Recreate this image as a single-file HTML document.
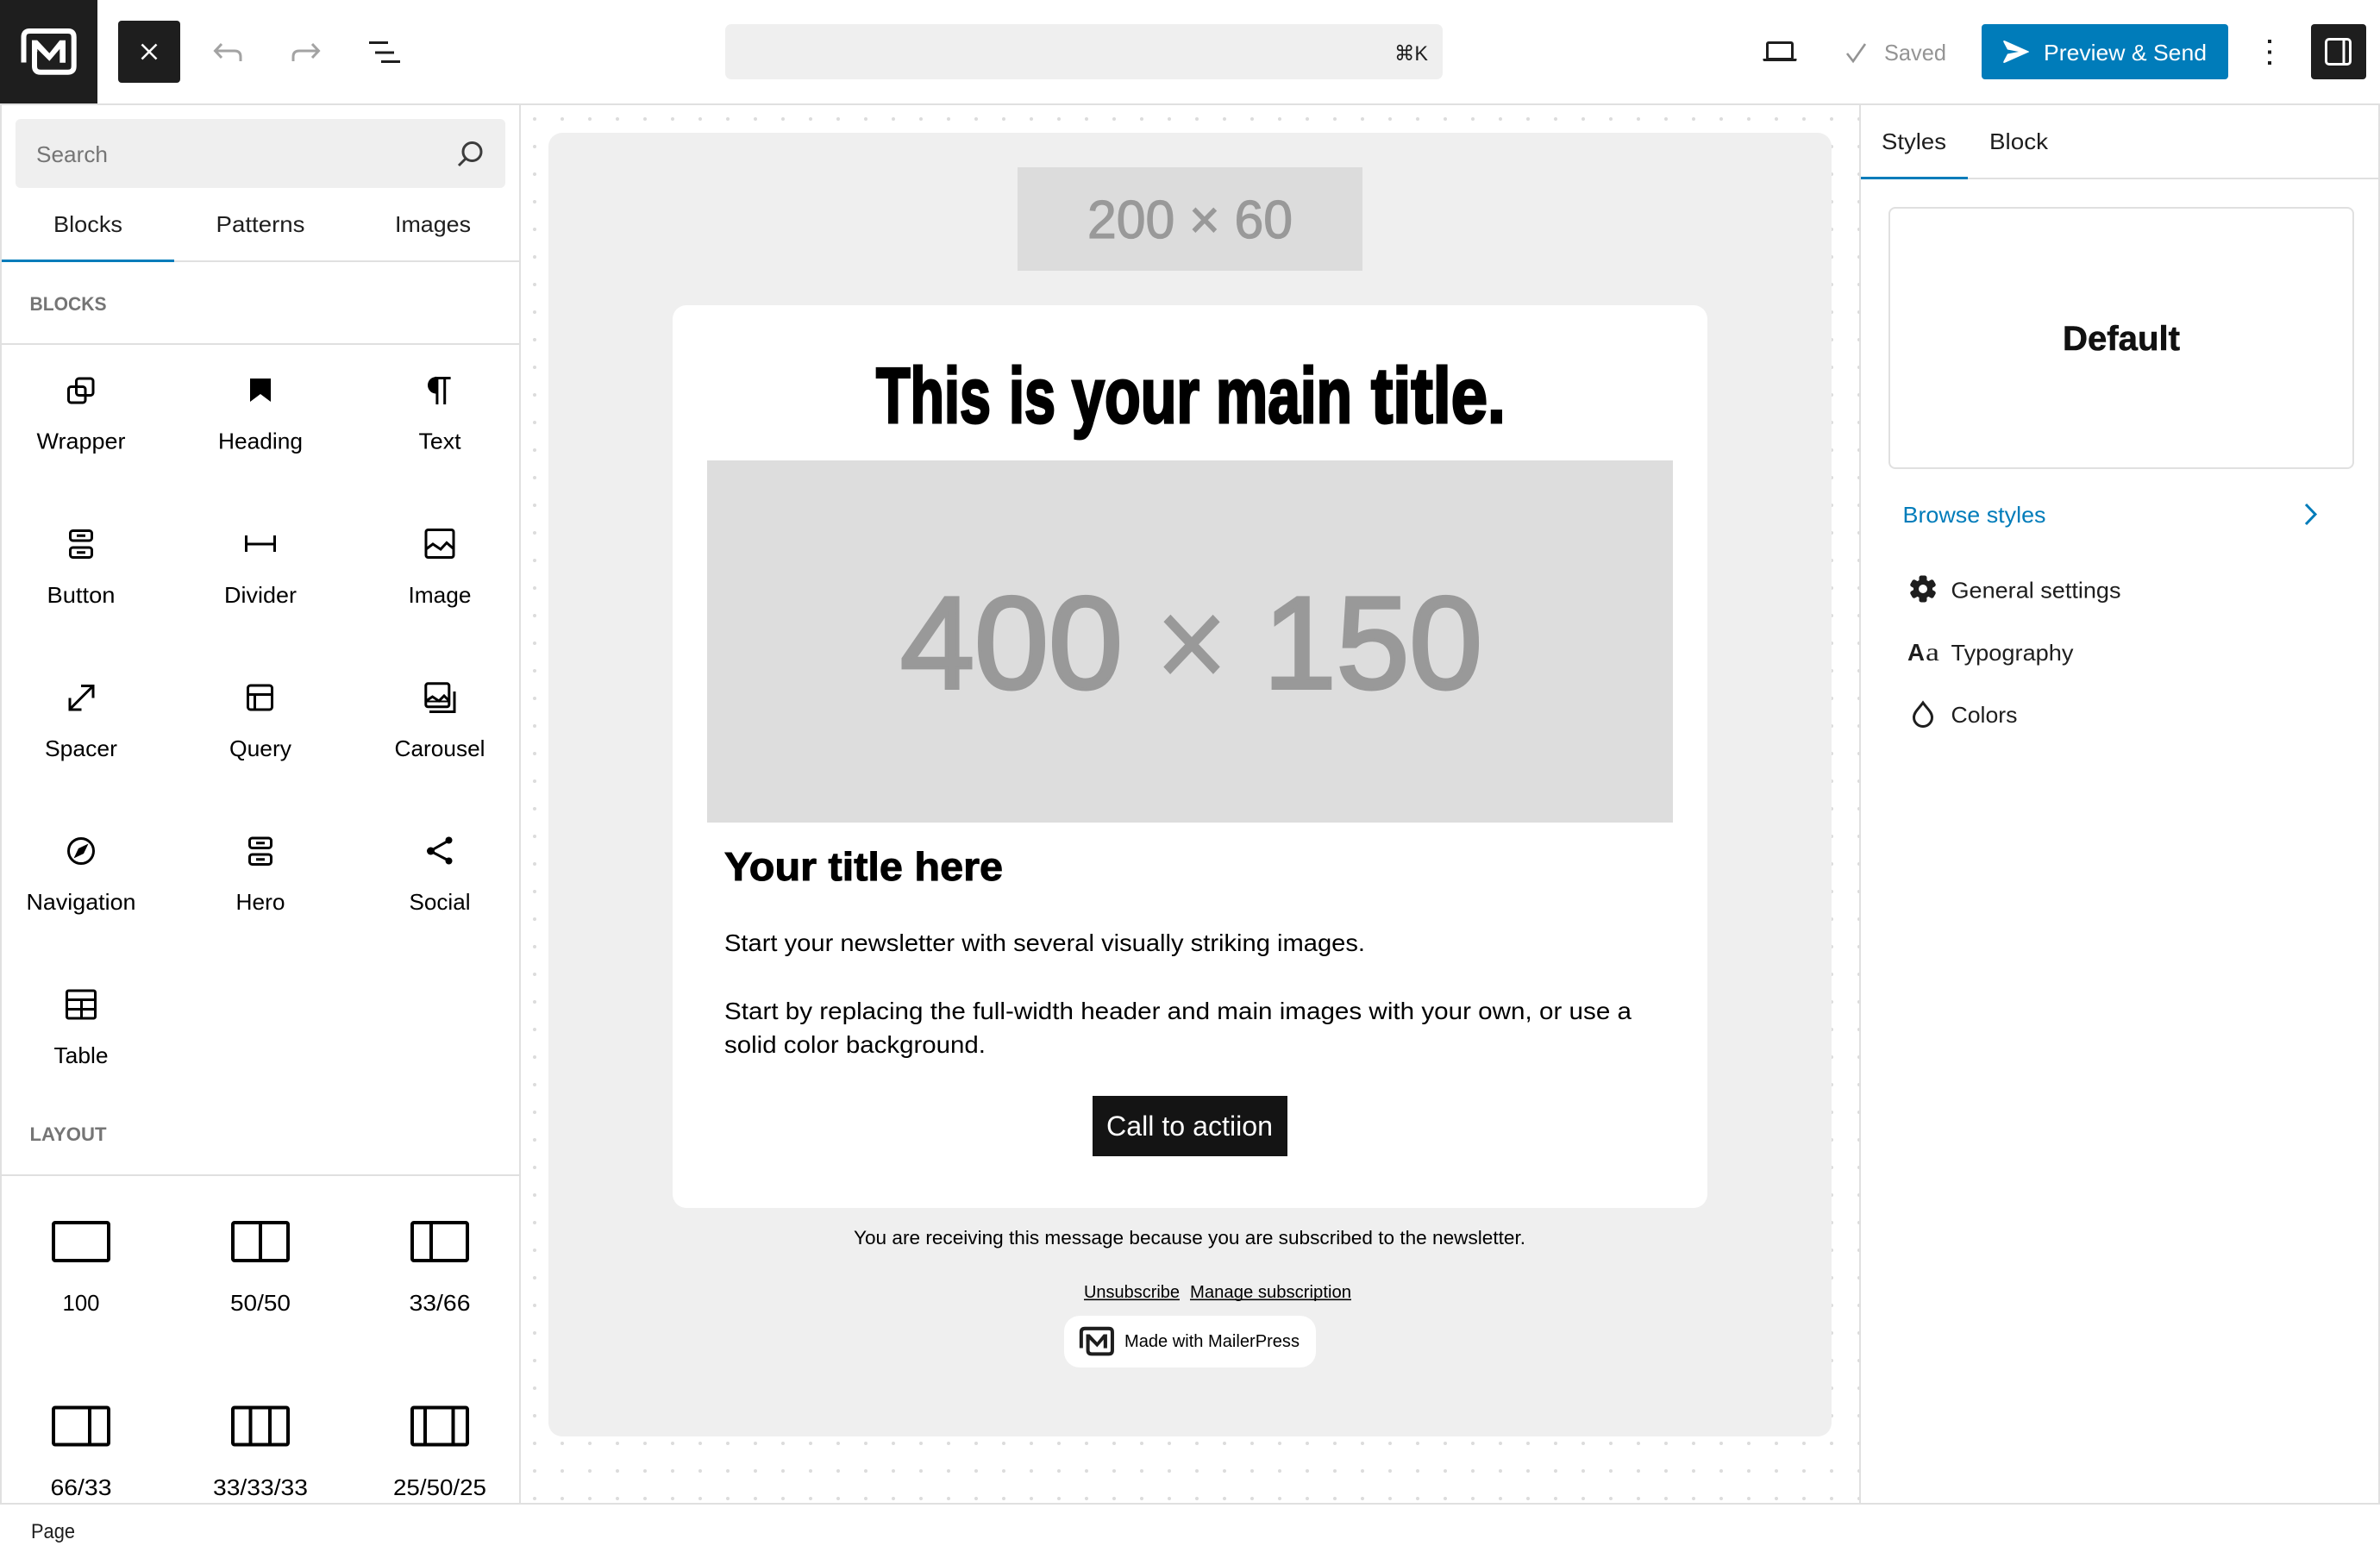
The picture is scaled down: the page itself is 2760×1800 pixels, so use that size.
<!DOCTYPE html>
<html lang="en">
<head>
<meta charset="utf-8">
<title>MailerPress editor</title>
<style>
html,body{margin:0;padding:0;background:#fff;width:2760px;height:1800px;overflow:hidden}
svg{display:block}
text{font-family:"Liberation Sans",sans-serif;fill:#000;font-size:26px}
.m{text-anchor:middle}
.d{fill:#1e1e1e}
.s{fill:none;stroke:#000;stroke-width:3}
.l{fill:none;stroke:#000;stroke-width:4}
.t{font-size:91px;font-weight:700;stroke:#000;stroke-width:3}
.b{font-size:152px;fill:#999;stroke:#999;stroke-width:4}
</style>
</head>
<body>
<svg width="2760" height="1800" viewBox="0 0 2760 1800" xmlns="http://www.w3.org/2000/svg">
<defs>
<pattern id="dots" x="604" y="122" width="32" height="32" patternUnits="userSpaceOnUse"><circle cx="16" cy="16" r="2" fill="#dcdcdc"/></pattern>
</defs>
<rect width="2760" height="1800" fill="#fff"/>

<!-- canvas -->
<rect x="604" y="122" width="1552" height="1621" fill="url(#dots)"/>
<rect x="636" y="154" width="1488" height="1512" rx="16" fill="#efefef"/>
<rect x="1180" y="194" width="400" height="120" fill="#dcdcdc"/>
<text x="1261" y="276" textLength="238" lengthAdjust="spacingAndGlyphs" style="font-size:62px;fill:#999;stroke:#999;stroke-width:1.2">200 × 60</text>
<rect x="780" y="354" width="1200" height="1047" rx="16" fill="#fff"/>
<text x="1016" y="490" textLength="133" lengthAdjust="spacingAndGlyphs" class="t">This</text>
<text x="1170" y="490" textLength="54" lengthAdjust="spacingAndGlyphs" class="t">is</text>
<text x="1243" y="490" textLength="148" lengthAdjust="spacingAndGlyphs" class="t">your</text>
<text x="1410" y="490" textLength="158" lengthAdjust="spacingAndGlyphs" class="t">main</text>
<text x="1590" y="490" textLength="156" lengthAdjust="spacingAndGlyphs" class="t">title.</text>
<rect x="820" y="534" width="1120" height="420" fill="#ddd"/>
<text x="1044" y="798" textLength="258" lengthAdjust="spacingAndGlyphs" class="b">400</text>
<text x="1340" y="798" textLength="84" lengthAdjust="spacingAndGlyphs" class="b" style="stroke-width:1">×</text>
<text x="1465" y="798" textLength="254" lengthAdjust="spacingAndGlyphs" class="b">150</text>
<text x="840" y="1021" textLength="323" lengthAdjust="spacingAndGlyphs" style="font-size:46px;font-weight:700;stroke:#000;stroke-width:1">Your title here</text>
<text x="840" y="1103" textLength="743" lengthAdjust="spacingAndGlyphs" style="font-size:28px">Start your newsletter with several visually striking images.</text>
<text x="840" y="1182" textLength="1052" lengthAdjust="spacingAndGlyphs" style="font-size:28px">Start by replacing the full-width header and main images with your own, or use a</text>
<text x="840" y="1221" textLength="303" lengthAdjust="spacingAndGlyphs" style="font-size:28px">solid color background.</text>
<rect x="1267" y="1271" width="226" height="70" fill="#141414"/>
<text x="1283" y="1317" textLength="193" lengthAdjust="spacingAndGlyphs" style="font-size:32px;fill:#fff">Call to actiion</text>
<text x="990" y="1443" textLength="779" lengthAdjust="spacingAndGlyphs" style="font-size:22px">You are receiving this message because you are subscribed to the newsletter.</text>
<text x="1257" y="1505" textLength="111" lengthAdjust="spacingAndGlyphs" style="font-size:20px">Unsubscribe</text>
<text x="1380" y="1505" textLength="187" lengthAdjust="spacingAndGlyphs" style="font-size:20px">Manage subscription</text>
<rect x="1257" y="1506.5" width="111" height="1.6" fill="#000"/>
<rect x="1380" y="1506.5" width="187" height="1.6" fill="#000"/>
<rect x="1234" y="1526" width="292" height="60" rx="18" fill="#fff"/>
<g transform="translate(1236.8 1518.5) scale(.62)">
<path d="M27.5 72.5V43Q27.5 36 34.5 36H79Q85.7 36 85.7 43V76.7Q85.7 83.7 79 83.7H47Q40 83.7 40 76.7V46.7" fill="none" stroke="#1e1e1e" stroke-width="6.5"/>
<path d="M37 46.7H43.3L57.3 61.7L69.3 46.7H76V72.7H69.3V56.7L57.3 70.7L43.3 56.7V60H37Z" fill="#1e1e1e"/>
</g>
<text x="1304" y="1562" textLength="203" lengthAdjust="spacingAndGlyphs" style="font-size:20px">Made with MailerPress</text>

<!-- top bar -->
<rect width="2760" height="120" fill="#fff"/>
<rect y="120" width="2760" height="2" fill="#e0e0e0"/>
<rect width="113" height="120" fill="#1e1e1e"/>
<path d="M27.5 72.5V43Q27.5 36 34.5 36H79Q85.7 36 85.7 43V76.7Q85.7 83.7 79 83.7H47Q40 83.7 40 76.7V46.7" fill="none" stroke="#fff" stroke-width="6"/>
<path d="M37 46.7H43.3L57.3 61.7L69.3 46.7H76V72.7H69.3V56.7L57.3 70.7L43.3 56.7V60H37Z" fill="#fff"/>
<rect x="137" y="24" width="72" height="72" rx="4" fill="#1e1e1e"/>
<path d="M164.5 51.5L181.5 68.5M181.5 51.5L164.5 68.5" stroke="#fff" stroke-width="2.6" fill="none"/>
<g fill="none" stroke="#a3a3a3" stroke-width="3">
<path d="M279 71V66Q279 59 272 59H251"/>
<path d="M257 51L249.5 59L257 67"/>
<path d="M340 71V66Q340 59 347 59H368"/>
<path d="M362 51L369.5 59L362 67"/>
</g>
<rect x="428" y="48" width="22" height="3" fill="#1e1e1e"/>
<rect x="435" y="59.500" width="22" height="3" fill="#1e1e1e"/>
<rect x="442" y="70" width="22" height="3" fill="#1e1e1e"/>
<rect x="841" y="28" width="832" height="64" rx="7" fill="#efefef"/>
<text x="1617" y="70" textLength="39" lengthAdjust="spacingAndGlyphs" class="d" style="font-family:'Liberation Sans','DejaVu Sans',sans-serif;font-size:24px">⌘K</text>
<rect x="2049.500" y="49.500" width="29" height="19" rx="1.500" fill="none" stroke="#1e1e1e" stroke-width="3"/>
<path d="M2044.500 68H2083.500V69.500Q2083.500 71 2082 71H2046Q2044.500 71 2044.500 69.500Z" fill="#1e1e1e"/>
<path d="M2142 62L2149 71L2163 51" fill="none" stroke="#949494" stroke-width="2.6"/>
<text x="2185" y="70" textLength="72" lengthAdjust="spacingAndGlyphs" style="fill:#949494">Saved</text>
<rect x="2298" y="28" width="286" height="64" rx="4" fill="#007cba"/>
<path d="M2325 47.200L2352 59.200Q2354 60 2352 60.800L2325 72.800Q2322.500 73.500 2323.500 71L2328 62.500L2341 60L2328 57.500L2323.500 49Q2322.500 46.500 2325 47.200Z" fill="#fff"/>
<text x="2370" y="70" textLength="189" lengthAdjust="spacingAndGlyphs" style="fill:#fff">Preview &amp; Send</text>
<rect x="2630" y="46" width="4" height="4" fill="#1e1e1e"/>
<rect x="2630" y="58.500" width="4" height="4" fill="#1e1e1e"/>
<rect x="2630" y="71" width="4" height="4" fill="#1e1e1e"/>
<rect x="2680" y="28" width="64" height="64" rx="4" fill="#1e1e1e"/>
<rect x="2697.500" y="45.500" width="28" height="29" rx="3.500" fill="none" stroke="#fff" stroke-width="3"/>
<rect x="2716.500" y="45" width="3" height="30" fill="#fff"/>

<!-- left panel -->
<rect x="0" y="122" width="604" height="1621" fill="#fff"/>
<rect x="0" y="122" width="2" height="1621" fill="#e0e0e0"/>
<rect x="602" y="122" width="2" height="1621" fill="#e0e0e0"/>
<rect x="18" y="138" width="568" height="80" rx="6" fill="#efefef"/>
<text x="42" y="188" textLength="83" lengthAdjust="spacingAndGlyphs" style="fill:#757575">Search</text>
<circle cx="547.500" cy="176" r="10.500" fill="none" stroke="#3c3c3c" stroke-width="3"/>
<path d="M540 184L532 192" fill="none" stroke="#3c3c3c" stroke-width="3"/>
<text x="102" y="269" textLength="80" lengthAdjust="spacingAndGlyphs" class="m d">Blocks</text>
<text x="302" y="269" textLength="103" lengthAdjust="spacingAndGlyphs" class="m d">Patterns</text>
<text x="502" y="269" textLength="88" lengthAdjust="spacingAndGlyphs" class="m d">Images</text>
<rect x="2" y="302" width="600" height="2" fill="#e0e0e0"/>
<rect x="2" y="301" width="200" height="3" fill="#007cba"/>
<text x="34.500" y="360" textLength="89" lengthAdjust="spacingAndGlyphs" style="font-size:22px;font-weight:700;fill:#757575">BLOCKS</text>
<rect x="2" y="398" width="600" height="2" fill="#e0e0e0"/>

<!-- block labels -->
<text x="94" y="520.500" textLength="103" lengthAdjust="spacingAndGlyphs" class="m">Wrapper</text>
<text x="302" y="520.500" textLength="98" lengthAdjust="spacingAndGlyphs" class="m">Heading</text>
<text x="510" y="520.500" textLength="49" lengthAdjust="spacingAndGlyphs" class="m">Text</text>
<text x="94" y="699" textLength="79" lengthAdjust="spacingAndGlyphs" class="m">Button</text>
<text x="302" y="699" textLength="84" lengthAdjust="spacingAndGlyphs" class="m">Divider</text>
<text x="510" y="699" textLength="73" lengthAdjust="spacingAndGlyphs" class="m">Image</text>
<text x="94" y="877" textLength="84" lengthAdjust="spacingAndGlyphs" class="m">Spacer</text>
<text x="302" y="877" textLength="72" lengthAdjust="spacingAndGlyphs" class="m">Query</text>
<text x="510" y="877" textLength="105" lengthAdjust="spacingAndGlyphs" class="m">Carousel</text>
<text x="94" y="1055" textLength="127" lengthAdjust="spacingAndGlyphs" class="m">Navigation</text>
<text x="302" y="1055" textLength="57" lengthAdjust="spacingAndGlyphs" class="m">Hero</text>
<text x="510" y="1055" textLength="71" lengthAdjust="spacingAndGlyphs" class="m">Social</text>
<text x="94" y="1233" textLength="63" lengthAdjust="spacingAndGlyphs" class="m">Table</text>
<text x="34.500" y="1323" textLength="89" lengthAdjust="spacingAndGlyphs" style="font-size:22px;font-weight:700;fill:#757575">LAYOUT</text>
<rect x="2" y="1362" width="600" height="2" fill="#e0e0e0"/>
<text x="94" y="1520" textLength="43" lengthAdjust="spacingAndGlyphs" class="m">100</text>
<text x="302" y="1520" textLength="70" lengthAdjust="spacingAndGlyphs" class="m">50/50</text>
<text x="510" y="1520" textLength="71" lengthAdjust="spacingAndGlyphs" class="m">33/66</text>
<text x="94" y="1734" textLength="71" lengthAdjust="spacingAndGlyphs" class="m">66/33</text>
<text x="302" y="1734" textLength="110" lengthAdjust="spacingAndGlyphs" class="m">33/33/33</text>
<text x="510" y="1734" textLength="108" lengthAdjust="spacingAndGlyphs" class="m">25/50/25</text>

<!-- block icons -->
<rect x="88.500" y="439" width="19.500" height="19.500" rx="3" class="s"/>
<rect x="79.500" y="448.500" width="19.500" height="18.500" rx="3" class="s"/>
<path d="M290 439H314V466L302 457L290 466Z" fill="#000"/>
<path transform="translate(486 429) scale(2)" d="M18.300 4H9.900v-.1l-.9.200c-2.300.4-4 2.400-4 4.800s1.700 4.400 4 4.800l.7.100V20h1.500V5.500h2.900V20h1.500V5.500h2.700V4z" fill="#000"/>
<rect x="81.500" y="615.500" width="25" height="11.500" rx="3" class="s"/>
<rect x="81.500" y="635" width="25" height="11.500" rx="3" class="s"/>
<path d="M89 621.300H99M89 640.800H99" class="s"/>
<rect x="284" y="621" width="3" height="19" fill="#000"/>
<rect x="317" y="621" width="3" height="19" fill="#000"/>
<rect x="285" y="629.500" width="34" height="3" fill="#000"/>
<rect x="494" y="614.500" width="32" height="32" rx="2.500" class="s"/>
<path d="M494 637L502 631L511 637L518 629.500L526.500 637" class="s"/>
<path d="M80.500 823L107.500 796" class="s"/>
<path d="M94 795.500H108V809.500M81 809.500V823H94.500" class="s"/>
<rect x="287.500" y="795" width="28" height="28" rx="3" class="s"/>
<path d="M287.500 805.500H315.500M295.500 805.500V823" class="s"/>
<rect x="493.800" y="792.800" width="27" height="27" rx="2.500" class="s"/>
<path d="M494 813L501.500 808L509 813L515 807L521 813" class="s"/>
<path d="M494 813.500H521" stroke="#000" stroke-width="2" fill="none"/>
<path d="M527 802V825.500H498" class="s"/>
<circle cx="94" cy="987" r="14.500" class="s"/>
<path d="M102.500 978.500L97 990L85.500 995.500L91 984Z" fill="#000"/>
<rect x="289.500" y="972" width="25" height="11.500" rx="3" class="s"/>
<rect x="289.500" y="991" width="25" height="11.500" rx="3" class="s"/>
<path d="M297 977.800H307M297 996.800H307" class="s"/>
<path d="M499 987L521 974.500M499 987L521 998.500" class="s"/>
<circle cx="499.500" cy="987" r="4.500" fill="#000"/>
<circle cx="520.500" cy="974.500" r="4" fill="#000"/>
<circle cx="520.500" cy="998.500" r="4" fill="#000"/>
<rect x="77.500" y="1149" width="33" height="32" rx="2" class="s"/>
<path d="M77.500 1159.500H110.500M77.500 1170.500H110.500M94.500 1159.500V1181" class="s"/>

<!-- layout icons -->
<rect x="62" y="1418" width="64" height="44" rx="2" class="l"/>
<rect x="270" y="1418" width="64" height="44" rx="2" class="l"/>
<path d="M302 1418V1462" class="l"/>
<rect x="478" y="1418" width="64" height="44" rx="2" class="l"/>
<path d="M500 1418V1462" class="l"/>
<rect x="62" y="1632.500" width="64" height="43" rx="2" class="l"/>
<path d="M104 1632.500V1675.500" class="l"/>
<rect x="270" y="1632.500" width="64" height="43" rx="2" class="l"/>
<path d="M290.500 1632.500V1675.500M313 1632.500V1675.500" class="l"/>
<rect x="478" y="1632.500" width="64" height="43" rx="2" class="l"/>
<path d="M493 1632.500V1675.500M525.500 1632.500V1675.500" class="l"/>

<!-- right panel -->
<rect x="2156" y="122" width="604" height="1621" fill="#fff"/>
<rect x="2156" y="122" width="2" height="1621" fill="#e0e0e0"/>
<rect x="2758" y="122" width="2" height="1621" fill="#e0e0e0"/>
<text x="2182" y="173" textLength="75" lengthAdjust="spacingAndGlyphs" class="d">Styles</text>
<text x="2307" y="173" textLength="68" lengthAdjust="spacingAndGlyphs" class="d">Block</text>
<rect x="2158" y="206" width="600" height="2" fill="#e0e0e0"/>
<rect x="2158" y="205" width="124" height="3" fill="#007cba"/>
<rect x="2191" y="241" width="538" height="302" rx="7" fill="#fff" stroke="#e0e0e0" stroke-width="2"/>
<text x="2392" y="406" textLength="136" lengthAdjust="spacingAndGlyphs" style="font-size:40px;font-weight:700;fill:#111;stroke:#111;stroke-width:.6">Default</text>
<text x="2206.500" y="606" textLength="166" lengthAdjust="spacingAndGlyphs" style="fill:#007cba">Browse styles</text>
<path d="M2674 585L2685 596.500L2674 608" fill="none" stroke="#007cba" stroke-width="3"/>
<g fill="#1e1e1e">
<circle cx="2230" cy="683" r="11"/>
<rect x="2225.500" y="667.500" width="9" height="31" rx="2.500"/>
<rect x="2225.500" y="667.500" width="9" height="31" rx="2.500" transform="rotate(60 2230 683)"/>
<rect x="2225.500" y="667.500" width="9" height="31" rx="2.500" transform="rotate(120 2230 683)"/>
</g>
<circle cx="2230" cy="683" r="5" fill="#fff"/>
<text x="2262.500" y="693.500" textLength="197" lengthAdjust="spacingAndGlyphs" class="d">General settings</text>
<text x="2212" y="766" textLength="20" lengthAdjust="spacingAndGlyphs" class="d" style="font-size:28px;font-weight:700">A</text>
<text x="2233" y="766" textLength="16" lengthAdjust="spacingAndGlyphs" class="d" style="font-family:'Liberation Serif',serif;font-size:30px">a</text>
<text x="2262.500" y="766" textLength="142" lengthAdjust="spacingAndGlyphs" class="d">Typography</text>
<path d="M2230 815C2225 822 2219.500 826 2219.500 832A10.500 10.500 0 0 0 2240.500 832C2240.500 826 2235 822 2230 815Z" fill="none" stroke="#1e1e1e" stroke-width="3"/>
<text x="2262.500" y="838" textLength="77" lengthAdjust="spacingAndGlyphs" class="d">Colors</text>

<!-- status bar -->
<rect y="1743" width="2760" height="57" fill="#fff"/>
<rect y="1743" width="2760" height="2" fill="#e0e0e0"/>
<text x="36" y="1784" textLength="51" lengthAdjust="spacingAndGlyphs" class="d" style="font-size:24px">Page</text>
</svg>
</body>
</html>
